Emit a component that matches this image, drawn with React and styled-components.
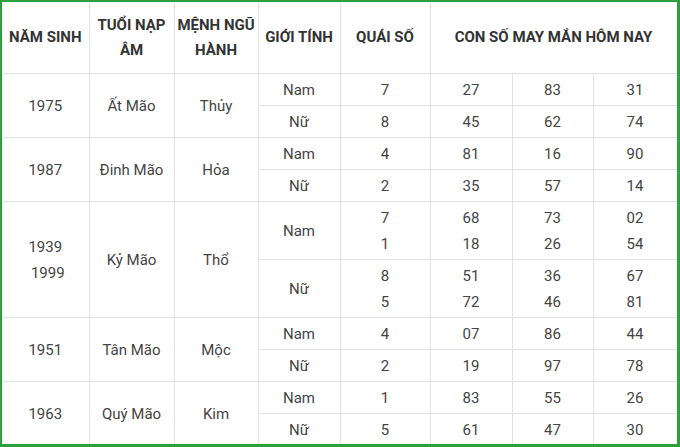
import React from 'react';
import styled, { createGlobalStyle } from 'styled-components';

const GlobalStyle = createGlobalStyle`
  html, body {
    margin: 0;
    padding: 0;
    background: #fff;
  }
  body {
    font-family: Roboto, "Noto Sans", "Liberation Sans", sans-serif;
  }
`;

const Frame = styled.div`
  width: 680px;
  height: 447px;
  box-sizing: border-box;
  border-style: solid;
  border-color: #2f9e3c;
  border-width: 2px 3px 3px 2px;
  overflow: hidden;
`;

const Table = styled.table`
  width: 675px;
  border-collapse: collapse;
  table-layout: fixed;
  color: #444;
  font-size: 15px;
`;

const HeadCell = styled.th`
  height: 71px;
  padding: 0 2px;
  border: 1px solid #e2e2e2;
  border-top: none;
  font-weight: 700;
  color: #333;
  line-height: 25px;
  text-align: center;
  vertical-align: middle;
  &:first-child {
    border-left: none;
  }
`;

const Cell = styled.td`
  height: ${(p) => (p.$tall ? 57 : 31)}px;
  padding: 0;
  border: 1px solid #e2e2e2;
  text-align: center;
  vertical-align: middle;
  line-height: ${(p) => (p.$tall ? 26 : 20)}px;
  &:first-child {
    border-left: none;
  }
`;

const Lines = styled.span`
  display: block;
  padding-top: 1px;
`;

const Indent = styled.span`
  padding-left: ${(p) => p.$x}px;
`;

const widths = [87, 85, 84, 82, 90, 82, 81, 84];

const groups = [
  {
    year: ['1975'],
    nap: 'Ất Mão',
    menh: 'Thủy',
    rows: [
      { g: 'Nam', q: ['7'], n: [['27'], ['83'], ['31']] },
      { g: 'Nữ', q: ['8'], n: [['45'], ['62'], ['74']] },
    ],
  },
  {
    year: ['1987'],
    nap: 'Đinh Mão',
    menh: 'Hỏa',
    rows: [
      { g: 'Nam', q: ['4'], n: [['81'], ['16'], ['90']] },
      { g: 'Nữ', q: ['2'], n: [['35'], ['57'], ['14']] },
    ],
  },
  {
    year: ['1939', '1999'],
    nap: 'Kỷ Mão',
    menh: 'Thổ',
    tall: true,
    rows: [
      { g: 'Nam', q: ['7', '1'], n: [['68', '18'], ['73', '26'], ['02', '54']] },
      { g: 'Nữ', q: ['8', '5'], n: [['51', '72'], ['36', '46'], ['67', '81']] },
    ],
  },
  {
    year: ['1951'],
    nap: 'Tân Mão',
    menh: 'Mộc',
    rows: [
      { g: 'Nam', q: ['4'], n: [['07'], ['86'], ['44']] },
      { g: 'Nữ', q: ['2'], n: [['19'], ['97'], ['78']] },
    ],
  },
  {
    year: ['1963'],
    nap: 'Quý Mão',
    menh: 'Kim',
    rows: [
      { g: 'Nam', q: ['1'], n: [['83'], ['55'], ['26']] },
      { g: 'Nữ', q: ['5'], n: [['61'], ['47'], ['30']] },
    ],
  },
];

function Multi({ items }) {
  return (
    <Lines>
      {items.map((t, i) => (
        <React.Fragment key={i}>
          {i > 0 && <br />}
          {t}
        </React.Fragment>
      ))}
    </Lines>
  );
}

export default function App() {
  return (
    <>
      <GlobalStyle />
      <Frame>
        <Table>
          <colgroup>
            {widths.map((w, i) => (
              <col key={i} style={{ width: w }} />
            ))}
          </colgroup>
          <thead>
            <tr>
              <HeadCell>NĂM SINH</HeadCell>
              <HeadCell>
                TUỔI NẠP
                <br />
                ÂM
              </HeadCell>
              <HeadCell>
                MỆNH NGŨ
                <br />
                HÀNH
              </HeadCell>
              <HeadCell>GIỚI TÍNH</HeadCell>
              <HeadCell>QUÁI SỐ</HeadCell>
              <HeadCell colSpan={3}>CON SỐ MAY MẮN HÔM NAY</HeadCell>
            </tr>
          </thead>
          <tbody>
            {groups.map((grp) =>
              grp.rows.map((r, ri) => (
                <tr key={grp.year[0] + ri}>
                  {ri === 0 && (
                    <>
                      <Cell rowSpan={2} $tall={grp.tall}>
                        {grp.year.length > 1 ? (
                          <Lines>
                            {grp.year[0]}
                            <br />
                            <Indent $x={5}>{grp.year[1]}</Indent>
                          </Lines>
                        ) : (
                          grp.year[0]
                        )}
                      </Cell>
                      <Cell rowSpan={2} $tall={grp.tall}>
                        {grp.nap}
                      </Cell>
                      <Cell rowSpan={2} $tall={grp.tall}>
                        {grp.menh}
                      </Cell>
                    </>
                  )}
                  <Cell $tall={grp.tall}>{r.g}</Cell>
                  <Cell $tall={grp.tall}>
                    <Multi items={r.q} />
                  </Cell>
                  {r.n.map((v, vi) => (
                    <Cell key={vi} $tall={grp.tall}>
                      <Multi items={v} />
                    </Cell>
                  ))}
                </tr>
              ))
            )}
          </tbody>
        </Table>
      </Frame>
    </>
  );
}
